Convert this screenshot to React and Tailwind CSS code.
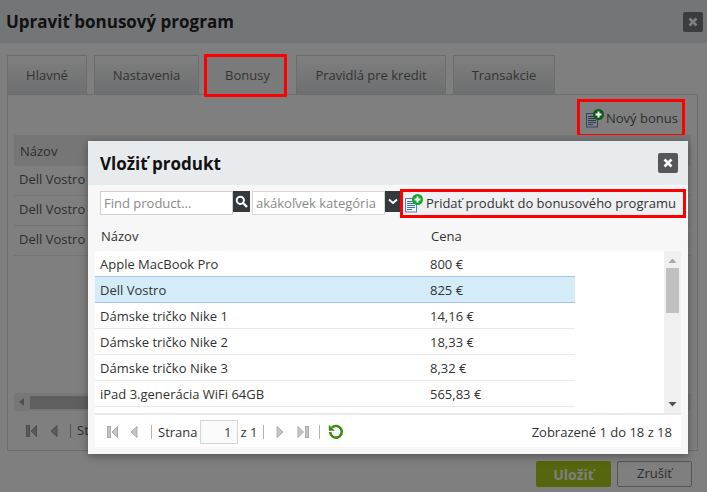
const font = { fontFamily: '"Open Sans", sans-serif' };

function DocPlus({ dim }) {
  const stroke = dim ? "#38465c" : "#4f7fc4";
  const fill = dim ? "#7d7f83" : "#f3f6fb";
  const line = dim ? "#2c3a55" : "#3a6fc0";
  const green = dim ? "#0b5c16" : "#12a52b";
  return (
    <svg width="19" height="19" viewBox="0 0 19 19" className="shrink-0">
      <rect x="0.5" y="4.5" width="11" height="13.5" fill={fill} stroke={stroke} />
      <path d="M2 7.5h8M2 9.5h8M2 11.5h8M2 13.5h8M2 15.5h5" stroke={line} strokeWidth="1" />
      <circle cx="12.5" cy="5.5" r="5.5" fill={green} />
      <path d="M12.5 2.5v6M9.5 5.5h6" stroke="#fff" strokeWidth="2" />
    </svg>
  );
}

function Pager({ kind, dim }) {
  const c = dim ? "#5a5a5a" : "#c4c4c4";
  const s = dim ? "#4e4e4e" : "#ababab";
  const paths = {
    first: <><rect x="0.5" y="1.5" width="3" height="11" fill={c} stroke={s} /><path d="M10.5 1.5v11L5 7z" fill={c} stroke={s} /></>,
    prev: <path d="M9 1.5v11L3 7z" fill={c} stroke={s} />,
    next: <path d="M3 1.5v11L9 7z" fill={c} stroke={s} />,
    last: <><path d="M1 1.5v11L6.5 7z" fill={c} stroke={s} /><rect x="8.5" y="1.5" width="3" height="11" fill={c} stroke={s} /></>,
  };
  return <svg width="12" height="14" viewBox="0 0 12 14" className="shrink-0">{paths[kind]}</svg>;
}

function CloseBtn({ className }) {
  return (
    <div className={`flex items-center justify-center rounded-[2px] ${className}`}>
      <svg width="10" height="10" viewBox="0 0 10 10">
        <path d="M1.5 1.5l7 7M8.5 1.5l-7 7" stroke="currentColor" strokeWidth="2.6" />
      </svg>
    </div>
  );
}

const products = [
  ["Apple MacBook Pro", "800 €"],
  ["Dell Vostro", "825 €", true],
  ["Dámske tričko Nike 1", "14,16 €"],
  ["Dámske tričko Nike 2", "18,33 €"],
  ["Dámske tričko Nike 3", "8,32 €"],
  ["iPad 3.generácia WiFi 64GB", "565,83 €"],
];

function Tab({ children, className }) {
  return (
    <div className={`h-[39px] pt-[1px] flex items-center justify-center border border-b-0 border-[#6c6c6c] bg-gradient-to-b from-[#7f7f7f] to-[#6e6f70] text-[#333] ${className}`}>
      {children}
    </div>
  );
}

function Dialog() {
  return (
    <div className="absolute left-[88px] top-[141px] w-[600px] h-[313px] bg-[#f7f7f7] shadow-[0_2px_8px_rgba(0,0,0,0.35)] flex flex-col text-[13px] text-[#333]">
      <div className="h-[44px] shrink-0 bg-[#e8ebee] flex items-center justify-between pl-[12px] pr-[10px]">
        <div className="text-[17px] font-bold text-[#111] leading-none">Vložiť produkt</div>
        <CloseBtn className="w-[20px] h-[20px] bg-[#55585b] text-white" />
      </div>
      <div className="ml-[7px] h-[35px] shrink-0 flex items-center text-[13px]">
        <div className="ml-[5px] mt-[1px] w-[133px] h-[24px] pt-[1px] border border-[#cfcfcf] bg-white flex items-center pl-[3px] text-[#8a8a8a] shrink-0">Find product...</div>
        <div className="w-[17px] h-[21px] -mt-[2px] bg-[#35393c] flex items-center justify-center shrink-0">
          <svg width="13" height="13" viewBox="0 0 13 13">
            <circle cx="5.3" cy="5.3" r="3.6" fill="none" stroke="#fff" strokeWidth="2" />
            <path d="M8 8l4 4" stroke="#fff" strokeWidth="2.4" />
          </svg>
        </div>
        <div className="ml-[2px] mt-[1px] w-[133px] h-[24px] pt-[1px] border border-[#d8d8d8] bg-white flex items-center pl-[3px] text-[#8a8a8a] whitespace-nowrap shrink-0">akákoľvek kategória</div>
        <div className="w-[15px] h-[21px] -mt-[2px] bg-[#35393c] flex items-center justify-center shrink-0">
          <svg width="10" height="7" viewBox="0 0 10 7"><path d="M1 1.5l4 3.5 4-3.5" fill="none" stroke="#fff" strokeWidth="2" /></svg>
        </div>
        <div className="mt-[1px] w-[286px] h-[29px] border-[3px] border-[#ff0000] bg-[#eef0f2] flex items-center pl-[2px] gap-[2px] whitespace-nowrap shrink-0 text-[#333]">
          <DocPlus />
          <span className="pt-[2px]">Pridať produkt do bonusového programu</span>
        </div>
      </div>
      <div className="mx-[7px] h-[31px] pt-[2px] shrink-0 flex items-center">
        <div className="w-[336px] pl-[6px]">Názov</div>
        <div>Cena</div>
      </div>
      <div className="mx-[7px] h-[164px] shrink-0 bg-white flex border-b-2 border-[#e9e9e9]">
        <div className="w-[480px] overflow-hidden">
          {products.map(([name, price, sel]) => (
            <div key={name} className={`flex items-center ${sel ? "h-[27px] pt-[2px] -mt-[1px] bg-[#d4ebf8] border-y border-[#a9c3ea]" : "h-[26px] pt-[3px] border-b border-[#e9e9e9]"}`}>
              <div className="w-[335px] pl-[5px] whitespace-nowrap">{name}</div>
              <div>{price}</div>
            </div>
          ))}
        </div>
        <div className="flex-1" />
        <div className="w-[17px] bg-[#f0f0f0] flex flex-col items-center pt-[7px] pb-[6px]">
          <svg width="9" height="5" viewBox="0 0 9 5" className="mb-[5px]"><path d="M0.5 5L4.5 0.5 8.5 5z" fill="#a8a8a8" /></svg>
          <div className="w-[13px] h-[45px] bg-[#c0c0c0]" />
          <div className="flex-1" />
          <svg width="9" height="5" viewBox="0 0 9 5"><path d="M0.5 0L4.5 4.5 8.5 0z" fill="#505050" /></svg>
        </div>
      </div>
      <div className="mx-[7px] h-[32px] pt-[1px] shrink-0 bg-white flex items-center pl-[12px] pr-[9px]">
        <Pager kind="first" />
        <div className="ml-[9px]"><Pager kind="prev" /></div>
        <div className="ml-[11px] h-[14px] w-px bg-[#b5b3a5]" />
        <span className="ml-[6px] pt-[2px]">Strana</span>
        <div className="ml-[2px] w-[38px] h-[24px] pt-[2px] border border-[#d5d5d5] bg-[#fbfbfb] flex items-center justify-end pr-[5px]">1</div>
        <span className="ml-[3px] pt-[2px]">z 1</span>
        <div className="ml-[6px] h-[14px] w-px bg-[#b5b3a5]" />
        <div className="ml-[10px]"><Pager kind="next" /></div>
        <div className="ml-[11px]"><Pager kind="last" /></div>
        <div className="ml-[10px] h-[14px] w-px bg-[#b5b3a5]" />
        <svg width="16" height="16" viewBox="0 0 16 16" className="ml-[8px]">
          <path d="M4 3.6A5.8 5.8 0 1 1 2.2 8" fill="none" stroke="#3a8a10" strokeWidth="2.6" />
          <path d="M0.8 0.8v6h6z" fill="#3a8a10" />
        </svg>
        <span className="ml-auto pt-[2px]">Zobrazené 1 do 18 z 18</span>
      </div>
    </div>
  );
}

export default function App() {
  return (
    <div className="relative w-[707px] h-[492px] overflow-hidden bg-[#7f7f7f] text-[13px] text-[#2d2d2d]" style={font}>
      <div className="h-[43px] bg-[#747576] flex items-center justify-between pl-[6px] pr-[4px]">
        <div className="text-[17px] font-bold text-[#111] leading-none">Upraviť bonusový program</div>
        <CloseBtn className="w-[20px] h-[20px] bg-[#3a3c3e] text-[#7f7f7f]" />
      </div>
      <div className="flex items-end pl-[7px] pt-[12px] h-[51px]">
        <Tab className="w-[80px]">Hlavné</Tab>
        <Tab className="w-[105px] ml-[7px]">Nastavenia</Tab>
        <div className="relative z-10 w-[83px] h-[43px] ml-[5px] -mb-[3px] pl-[4px] border-[3px] border-[#ff0000] rounded-[1px] bg-[#7a7a7a] flex items-center justify-center text-[#333]">Bonusy</div>
        <Tab className="w-[150px] ml-[9px]">Pravidlá pre kredit</Tab>
        <Tab className="w-[102px] ml-[7px]">Transakcie</Tab>
      </div>
      <div className="ml-[7px] w-[691px] h-[357px] border border-[#6c6c6c] flex flex-col">
        <div className="h-[40px] shrink-0 flex justify-end items-start pr-[12px] pt-[4px]">
          <div className="w-[108px] h-[38px] border-[3px] border-[#ff0000] flex items-center pl-[6px] gap-[1px] whitespace-nowrap">
            <DocPlus dim />
            <span className="pt-[2px]">Nový bonus</span>
          </div>
        </div>
        <div className="mx-[6px] h-[31px] pt-[2px] shrink-0 bg-[#767676] flex items-center pl-[6px]">Názov</div>
        {[0, 1, 2].map((i) => (
          <div key={i} className="mx-[6px] h-[30px] pb-[2px] shrink-0 border-b border-[#747474] flex items-center pl-[5px]">Dell Vostro</div>
        ))}
        <div className="flex-1" />
        <div className="mx-[6px] h-[18px] shrink-0 bg-[#777] flex items-center">
          <svg width="5" height="8" viewBox="0 0 5 8" className="ml-[5px]"><path d="M5 0v8L0 4z" fill="#4e4e4e" /></svg>
          <div className="ml-[6px] w-[60px] h-[13px] bg-[#5f5f5f]" />
        </div>
        <div className="h-[39px] shrink-0 flex items-center pl-[18px]">
          <Pager kind="first" dim />
          <div className="ml-[10px]"><Pager kind="prev" dim /></div>
          <div className="ml-[10px] h-[14px] w-px bg-[#565656]" />
          <span className="ml-[6px]">Strana</span>
        </div>
      </div>
      <div className="flex justify-end pt-[10px] pr-[15px] gap-[6px]">
        <div className="w-[75px] h-[26px] rounded-[2px] bg-[#56660f] flex items-center justify-center font-bold text-[14px] text-[#7f7f7f]">Uložiť</div>
        <div className="w-[75px] h-[26px] rounded-[2px] border border-[#555] flex items-center justify-center text-[#2d2d2d]">Zrušiť</div>
      </div>
      <Dialog />
    </div>
  );
}
